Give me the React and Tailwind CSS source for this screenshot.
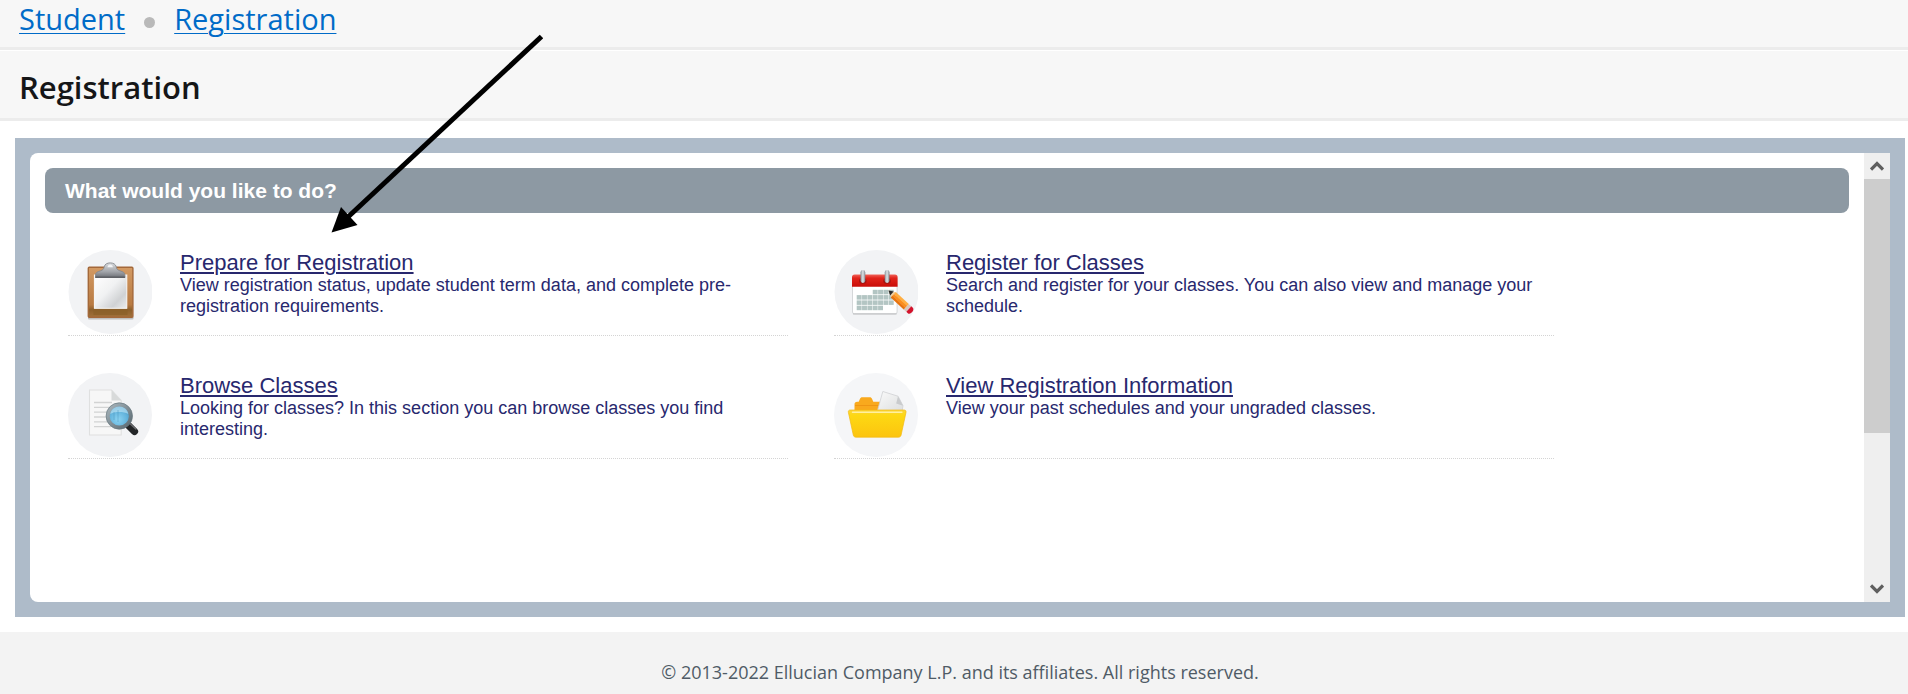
import React from 'react';

const ClipboardIcon = () => (
  <svg viewBox="0 0 84 84" className="w-[84px] h-[84px] shrink-0" aria-hidden="true">
    <defs>
      <linearGradient id="board" x1="0" y1="0" x2="0" y2="1">
        <stop offset="0" stopColor="#d39a63" />
        <stop offset="0.75" stopColor="#b87a42" />
        <stop offset="0.85" stopColor="#8d602c" />
        <stop offset="1" stopColor="#a2713a" />
      </linearGradient>
      <linearGradient id="sheet" x1="0" y1="0" x2="1" y2="1">
        <stop offset="0" stopColor="#ffffff" />
        <stop offset="0.45" stopColor="#f0f1f2" />
        <stop offset="0.75" stopColor="#d0d2d4" />
        <stop offset="1" stopColor="#eceded" />
      </linearGradient>
      <linearGradient id="clip" x1="0" y1="0" x2="0" y2="1">
        <stop offset="0" stopColor="#d9dbde" />
        <stop offset="0.6" stopColor="#a2a5aa" />
        <stop offset="1" stopColor="#6d7076" />
      </linearGradient>
    </defs>
    <circle cx="42.5" cy="42" r="42" fill="#f2f3f5" />
    <rect x="20" y="66.5" width="45.5" height="3" rx="1" fill="#a9a9aa" opacity="0.7" />
    <rect x="20.3" y="17.3" width="44.6" height="50" rx="1" fill="url(#board)" stroke="#a3683a" strokeWidth="1.4" />
    <rect x="25.5" y="58" width="34" height="7" fill="#8a5f28" opacity="0.7" />
    <rect x="26.4" y="25" width="32.4" height="33.3" fill="url(#sheet)" stroke="#fafafa" strokeWidth="1" />
    <path d="M27.5 27.5V25c0-2.6 2-3.2 5-4.2 2.6-.9 3.3-1.8 3.7-4 .5-2.6 3-3.9 6-3.9s5.500 1.300 6 3.900c.4 2.200 1.100 3.100 3.700 4 3 1 5 1.600 5 4.200v2.500z" fill="url(#clip)" stroke="#85888d" strokeWidth="0.9" />
    <path d="M39.5 17.2c.2-1.8 1.3-2.6 2.7-2.6s2.500.8 2.700 2.600z" fill="#f2f3f5" />
    <path d="M27.3 27.2h29.8" stroke="#55575c" strokeWidth="1.2" />
  </svg>
);

const CELLS = [
  [3, 0], [4, 0], [5, 0], [6, 0],
  [0, 1], [1, 1], [2, 1], [3, 1], [4, 1], [5, 1], [6, 1],
  [0, 2], [1, 2], [2, 2], [3, 2], [4, 2], [5, 2], [6, 2],
  [0, 3], [1, 3], [2, 3], [3, 3], [4, 3],
];

const CalendarIcon = () => (
  <svg viewBox="0 0 84 84" className="w-[84px] h-[84px] shrink-0" aria-hidden="true">
    <defs>
      <linearGradient id="red" x1="0" y1="0" x2="0" y2="1">
        <stop offset="0" stopColor="#f0655b" />
        <stop offset="0.3" stopColor="#e2231a" />
        <stop offset="1" stopColor="#c80d08" />
      </linearGradient>
      <linearGradient id="ring" x1="0" y1="0" x2="1" y2="0">
        <stop offset="0" stopColor="#878f96" />
        <stop offset="0.5" stopColor="#dfe4e8" />
        <stop offset="1" stopColor="#7e868d" />
      </linearGradient>
    </defs>
    <circle cx="42.5" cy="42" r="42" fill="#f2f3f5" />
    <rect x="18.5" y="27" width="44.6" height="37" rx="2" fill="#ffffff" stroke="#d5d7d9" />
    <path d="M19 63.8h43.6" stroke="#c3c5c7" strokeWidth="1.2" />
    <path d="M18 36.8V27c0-1.8 1-2.6 2.6-2.6H61c1.6 0 2.6.8 2.6 2.6v9.8z" fill="url(#red)" />
    <ellipse cx="28.8" cy="31" rx="3.8" ry="3" fill="#a81410" />
    <ellipse cx="53" cy="31" rx="3.8" ry="3" fill="#a81410" />
    <rect x="26.5" y="20" width="4.8" height="13" rx="2.4" fill="url(#ring)" />
    <rect x="50.7" y="20" width="4.8" height="13" rx="2.4" fill="url(#ring)" />
    {CELLS.map(([col, row]) => (
      <rect key={`${col}-${row}`} x={22.7 + col * 5.35} y={39.8 + row * 5.3} width="4.9" height="4.5" fill="#b3c5c3" />
    ))}
    <g transform="translate(54.5 40.4) rotate(42.5)">
      <path d="M0 0l7-3.6v7.2z" fill="#f0cfa0" />
      <path d="M0 0l4.6-2.6v5.2z" fill="#2b2b2b" />
      <path d="M6.500-3.700H24.500v2.700H6.500z" fill="#ffae42" />
      <path d="M6.500-1.200H24.500v2.700H6.500z" fill="#fb8f1d" />
      <path d="M6.500 1.300H24.500v2.500H6.500z" fill="#e8730d" />
      <rect x="24" y="-3.7" width="3.6" height="7.5" fill="#d9c7bd" />
      <path d="M27.600-3.700h2c3 0 3.400 7.400 0 7.400h-2z" fill="#d3122b" />
    </g>
  </svg>
);

const BrowseIcon = () => (
  <svg viewBox="0 0 84 84" className="w-[84px] h-[84px] shrink-0" aria-hidden="true">
    <defs>
      <radialGradient id="lens" cx="0.45" cy="0.65" r="0.65">
        <stop offset="0" stopColor="#8bd3f2" />
        <stop offset="0.6" stopColor="#63b3dc" />
        <stop offset="1" stopColor="#4a90ba" />
      </radialGradient>
      <linearGradient id="rim" x1="0" y1="0" x2="1" y2="1">
        <stop offset="0" stopColor="#a7b4bb" />
        <stop offset="1" stopColor="#5b6a72" />
      </linearGradient>
    </defs>
    <circle cx="42" cy="42" r="42" fill="#f2f3f5" />
    <path d="M21.500 17h22l9.700 10.500V62H21.500z" fill="#f7f7f7" stroke="#dfe0e0" strokeWidth="1.1" />
    <path d="M43.500 17v10.500h9.700z" fill="#d8dada" />
    <path d="M26 29.500h18M26 34.300h17M26 39.200h13M26 44h12M26 48.800h14M26 53.600h17" stroke="#d2d3d3" strokeWidth="1.3" />
    <path d="M60.500 52.500l6 6" stroke="#232527" strokeWidth="7.2" strokeLinecap="round" />
    <path d="M61.800 50.500l6 5.500" stroke="#6b6d70" strokeWidth="1.4" strokeLinecap="round" />
    <circle cx="51.3" cy="43" r="11.4" fill="url(#lens)" stroke="url(#rim)" strokeWidth="3.6" />
    <circle cx="51.3" cy="43" r="13.2" fill="none" stroke="#66757d" strokeWidth="0.7" />
    <path d="M42.300 41c1-4.500 4.500-7.400 9-7.400s8 2.900 9 7.400c-5-2.600-13-2.600-18 0z" fill="#c4e7f6" opacity="0.6" />
    <path d="M46 39v8M50 37v12" stroke="#4a94bc" strokeWidth="0.8" opacity="0.6" />
  </svg>
);

const FolderIcon = () => (
  <svg viewBox="0 0 84 84" className="w-[84px] h-[84px] shrink-0" aria-hidden="true">
    <defs>
      <linearGradient id="folder" x1="0" y1="0" x2="0" y2="1">
        <stop offset="0" stopColor="#fbd53a" />
        <stop offset="0.2" stopColor="#fdd813" />
        <stop offset="1" stopColor="#fcc40f" />
      </linearGradient>
      <linearGradient id="page" x1="0" y1="0" x2="1" y2="1">
        <stop offset="0" stopColor="#fafafa" />
        <stop offset="1" stopColor="#dcdedf" />
      </linearGradient>
    </defs>
    <circle cx="42" cy="42" r="42" fill="#f5f6f8" />
    <path d="M20.500 44V31.500c0-2 1-2.800 2.600-2.800h1.600l1.200-2.800c.5-1.200 1.200-1.700 2.400-1.700h7.400c1.200 0 1.900.5 2.400 1.700l1.200 2.800H46V44z" fill="#f9a91d" />
    <path d="M21 32.500h24" stroke="#ef9613" strokeWidth="1" />
    <path d="M48.800 18.500l15.200 4.700 5 9.500-1 6H43.200z" fill="url(#page)" stroke="#cfd1d3" strokeWidth="0.8" />
    <path d="M64 23.200l-1.800 7.200 6.800 2.300z" fill="#c9cbcd" />
    <path d="M16.300 37h53.800c1.600 0 2.200 1 1.900 2.400l-4.900 22.700c-.3 1.400-1.200 2.100-2.600 2.100H21.900c-1.400 0-2.300-.7-2.600-2.100l-4.900-22.700c-.3-1.400.3-2.400 1.900-2.400z" fill="url(#folder)" stroke="#f3b913" strokeWidth="0.7" />
    <path d="M18.500 39.300h49.400" stroke="#fff0a0" strokeWidth="1.5" strokeLinecap="round" />
  </svg>
);

const actions = [
  {
    title: 'Prepare for Registration',
    text: 'View registration status, update student term data, and complete pre-registration requirements.',
    Icon: ClipboardIcon,
  },
  {
    title: 'Register for Classes',
    text: 'Search and register for your classes. You can also view and manage your schedule.',
    Icon: CalendarIcon,
  },
  {
    title: 'Browse Classes',
    text: 'Looking for classes? In this section you can browse classes you find interesting.',
    Icon: BrowseIcon,
  },
  {
    title: 'View Registration Information',
    text: 'View your past schedules and your ungraded classes.',
    Icon: FolderIcon,
  },
];

const ActionItem = ({ title, text, Icon }) => (
  <li className="flex gap-7 h-[86px] border-b border-dotted border-[#d4d4d4]">
    <Icon />
    <div className="text-[#28286e]">
      <a href="#" className="block w-fit text-[22px] leading-[25px] underline decoration-2 underline-offset-2">{title}</a>
      <p className="text-lg leading-[21px]">{text}</p>
    </div>
  </li>
);

const Scrollbar = () => (
  <div className="flex flex-col w-[26px] shrink-0 bg-[#efefef]">
    <button aria-label="Scroll up" className="flex items-center justify-center h-[26px]">
      <svg viewBox="0 0 14 10" className="w-[14px] h-[10px]"><path d="M1 8.500l6-6 6 6" fill="none" stroke="#5f5f5f" strokeWidth="3.2" /></svg>
    </button>
    <div className="flex-1">
      <div className="h-[64%] bg-[#cdcdcd]" />
    </div>
    <button aria-label="Scroll down" className="flex items-center justify-center h-[26px]">
      <svg viewBox="0 0 14 10" className="w-[14px] h-[10px]"><path d="M1 1.500l6 6 6-6" fill="none" stroke="#5f5f5f" strokeWidth="3.2" /></svg>
    </button>
  </div>
);

const App = () => {
  return (
    <div className="relative flex flex-col min-h-screen bg-white font-['Open_Sans',sans-serif]">
      <nav aria-label="Breadcrumb" className="flex items-center h-[50px] pb-[10px] px-[19px] gap-[19px] bg-[#f7f7f7] border-b-3 border-[#ececec] text-[29px] leading-10 text-[#006bc8]">
        <a href="#" className="underline decoration-1 underline-offset-3">Student</a>
        <span className="w-[11px] h-[11px] mt-2 rounded-full bg-[#b9b9b9]" />
        <a href="#" className="underline decoration-1 underline-offset-3">Registration</a>
      </nav>

      <header className="flex items-center h-[70px] mt-px pt-1 px-[19px] bg-[#f7f7f7] border-b-3 border-[#ececec]">
        <h1 className="text-[31px] leading-10 font-semibold text-[#151618]">Registration</h1>
      </header>

      <main className="flex flex-1 mt-[17px] mb-[15px] ml-[15px] mr-[3px] p-[15px] bg-[#aebbc9] font-['Liberation_Sans',sans-serif]">
        <section className="flex-1 p-[15px] rounded-l-lg bg-white">
          <h2 className="flex items-center h-[45px] px-5 rounded-lg bg-[#8d99a3] text-[21px] font-bold text-white">What would you like to do?</h2>
          <ul className="grid grid-cols-2 gap-x-[46px] gap-y-[37px] max-w-[1509px] mt-[37px] pl-[23px]">
            {actions.map((action) => (
              <ActionItem key={action.title} {...action} />
            ))}
          </ul>
        </section>
        <Scrollbar />
      </main>

      <footer className="flex items-center justify-center h-[62px] pl-3 pt-[18px] bg-[#f3f3f3] text-lg text-[#4f5b66]">
        © 2013-2022 Ellucian Company L.P. and its affiliates. All rights reserved.
      </footer>

      {/* pointer to the first action */}
      <svg viewBox="0 0 212 200" className="absolute left-[331px] top-[34px] w-[212px] h-[200px] pointer-events-none" aria-hidden="true">
        <path d="M210.500 2.500L17 183" stroke="#000" strokeWidth="5" />
        <path d="M0.500 198.500L10 173l16.500 18z" fill="#000" />
      </svg>
    </div>
  );
};

export default App;
